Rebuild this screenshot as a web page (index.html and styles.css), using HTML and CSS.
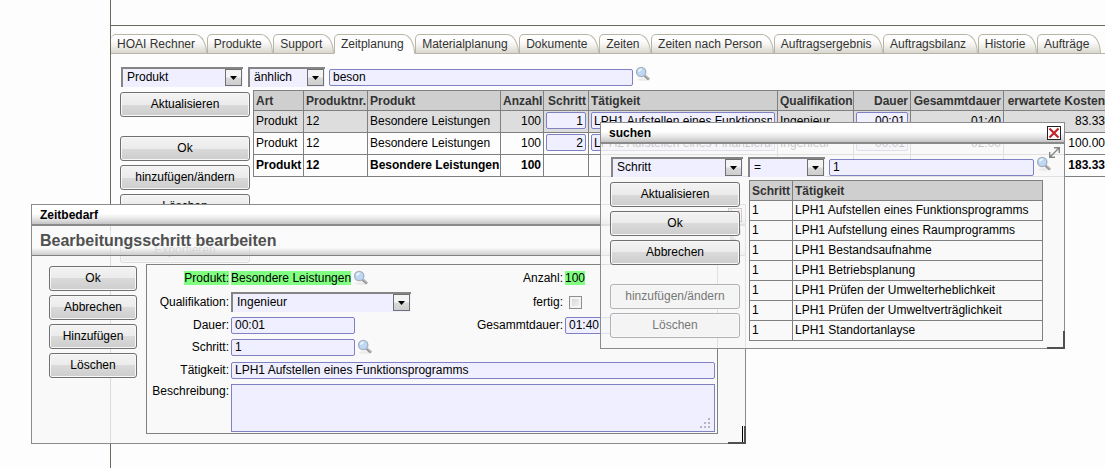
FILE: index.html
```
<!DOCTYPE html>
<html lang="de">
<head>
<meta charset="utf-8">
<title>Zeitplanung</title>
<link rel="stylesheet" href="styles.css">
</head>
<body>
<svg class="defs" aria-hidden="true">
  <symbol id="lens" viewBox="0 0 16 16">
    <ellipse cx="8" cy="13.500" rx="6" ry="1.500" fill="#ececec"/>
    <path d="M9.500 9.500l4.500 4" stroke="#949494" stroke-width="2.600"/>
    <path d="M9.800 9l4.400 3.900" stroke="#c4c4c4" stroke-width="1"/>
    <circle cx="6.200" cy="6" r="4.600" fill="#bcd8f5" stroke="#a6b2c0" stroke-width="1.400"/>
    <path d="M3.800 5.800a2.600 2.600 0 0 1 2.800-2.400" stroke="#f4faff" stroke-width="1.600" fill="none"/>
  </symbol>
  <symbol id="down" viewBox="0 0 15 15"><path d="M4 6h7L7.500 10z" fill="#000"/></symbol>
  <symbol id="cross" viewBox="0 0 12 12"><path d="M1.500 1.500l9 9M10.500 1.500l-9 9" stroke="#c4242b" stroke-width="2.200" fill="none"/></symbol>
  <symbol id="expand" viewBox="0 0 11 11"><path d="M1.500 9.500l8-8M5 .7h5.300v5.300M.7 5v5.300h5.300" stroke="#858585" stroke-width="1.400" fill="none"/></symbol>
</svg>

<main class="page">
  <div class="top"></div>
  <nav class="tabs">
    <a class="tab" href="#">HOAI Rechner</a>
    <a class="tab" href="#">Produkte</a>
    <a class="tab" href="#">Support</a>
    <a class="tab active" href="#">Zeitplanung</a>
    <a class="tab" href="#">Materialplanung</a>
    <a class="tab" href="#">Dokumente</a>
    <a class="tab" href="#">Zeiten</a>
    <a class="tab" href="#">Zeiten nach Person</a>
    <a class="tab" href="#">Auftragsergebnis</a>
    <a class="tab" href="#">Auftragsbilanz</a>
    <a class="tab" href="#">Historie</a>
    <a class="tab" href="#">Aufträge</a>
  </nav>
  <div class="filter">
    <span class="select w-field"><select aria-label="Feld"><option>Produkt</option></select><svg class="arrow"><use href="#down"/></svg></span>
    <span class="select w-op"><select aria-label="Vergleich"><option>änhlich</option></select><svg class="arrow"><use href="#down"/></svg></span>
    <input class="text w-query" aria-label="Suchbegriff" value="beson">
    <button class="lens" aria-label="Suchen"><svg><use href="#lens"/></svg></button>
  </div>
  <div class="content">
    <div class="actions">
      <button class="btn">Aktualisieren</button>
      <button class="btn apart">Ok</button>
      <button class="btn">hinzufügen/ändern</button>
      <button class="btn">Löschen</button>
      <button class="btn apart">Exportieren</button>
    </div>
    <table class="grid plan">
      <colgroup><col class="c-art"><col class="c-nr"><col class="c-prod"><col class="c-anz"><col class="c-step"><col class="c-task"><col class="c-qual"><col class="c-dur"><col class="c-sum"><col class="c-cost"></colgroup>
      <thead>
        <tr><th>Art</th><th>Produktnr.</th><th>Produkt</th><th class="num">Anzahl</th><th class="num">Schritt</th><th>Tätigkeit</th><th>Qualifikation</th><th class="num">Dauer</th><th class="num">Gesammtdauer</th><th class="num">erwartete Kosten</th></tr>
      </thead>
      <tbody>
        <tr class="selected"><td>Produkt</td><td>12</td><td>Besondere Leistungen</td><td class="num">100</td><td><input class="text num" aria-label="Schritt" value="1"></td><td><input class="text" aria-label="Tätigkeit" value="LPH1 Aufstellen eines Funktionsprogramms"></td><td>Ingenieur</td><td><input class="text num" aria-label="Dauer" value="00:01"></td><td class="num">01:40</td><td class="num">83.33</td></tr>
        <tr><td>Produkt</td><td>12</td><td>Besondere Leistungen</td><td class="num">100</td><td><input class="text num" aria-label="Schritt" value="2"></td><td><input class="text" aria-label="Tätigkeit" value="LPH2 Aufstellen eines Finanzierungsplans"></td><td>Ingenieur</td><td><input class="text num" aria-label="Dauer" value="00:01"></td><td class="num">02:00</td><td class="num">100.00</td></tr>
        <tr class="total"><td>Produkt</td><td>12</td><td>Besondere Leistungen</td><td class="num">100</td><td></td><td></td><td></td><td></td><td></td><td class="num">183.33</td></tr>
      </tbody>
    </table>
  </div>
</main>

<section class="window edit">
  <header class="titlebar">Zeitbedarf<button class="close" aria-label="Schließen"><svg><use href="#cross"/></svg></button></header>
  <svg class="expand"><use href="#expand"/></svg>
  <h1 class="heading">Bearbeitungsschritt bearbeiten</h1>
  <div class="edit-body">
    <div class="actions">
      <button class="btn">Ok</button>
      <button class="btn">Abbrechen</button>
      <button class="btn">Hinzufügen</button>
      <button class="btn">Löschen</button>
    </div>
    <form class="form">
      <span class="label"><mark>Produkt:</mark></span>
      <span class="value"><mark>Besondere Leistungen</mark><button type="button" class="lens" aria-label="Produkt suchen"><svg><use href="#lens"/></svg></button></span>
      <span class="label">Anzahl:</span>
      <span class="value"><mark>100</mark></span>

      <label class="label" for="qual">Qualifikation:</label>
      <span class="value"><span class="select w-qual"><select id="qual"><option>Ingenieur</option></select><svg class="arrow"><use href="#down"/></svg></span></span>
      <label class="label" for="done">fertig:</label>
      <span class="value"><input class="check" type="checkbox" id="done"></span>

      <label class="label" for="dur">Dauer:</label>
      <span class="value"><input class="text w-short" id="dur" value="00:01"></span>
      <label class="label" for="sum">Gesammtdauer:</label>
      <span class="value"><input class="text w-short" id="sum" value="01:40"></span>

      <label class="label" for="step">Schritt:</label>
      <span class="value wide"><input class="text w-short" id="step" value="1"><button type="button" class="lens" aria-label="Schritt suchen"><svg><use href="#lens"/></svg></button></span>

      <label class="label" for="task">Tätigkeit:</label>
      <span class="value wide"><input class="text w-full" id="task" value="LPH1 Aufstellen eines Funktionsprogramms"></span>

      <label class="label top-label" for="desc">Beschreibung:</label>
      <span class="value wide"><textarea class="area" id="desc"></textarea><svg class="grip" viewBox="0 0 11 11"><path d="M8 0h2v2H8zM4 4h2v2H4zM8 4h2v2H8zM0 8h2v2H0zM4 8h2v2H4zM8 8h2v2H8z" fill="#b4b4c4"/></svg></span>
    </form>
  </div>
  <span class="corner grabbed"></span>
</section>

<section class="window search">
  <header class="titlebar">suchen<button class="close" aria-label="Schließen"><svg><use href="#cross"/></svg></button></header>
  <svg class="expand"><use href="#expand"/></svg>
  <div class="filter">
    <span class="select w-field"><select aria-label="Feld"><option>Schritt</option></select><svg class="arrow"><use href="#down"/></svg></span>
    <span class="select w-op"><select aria-label="Vergleich"><option>=</option></select><svg class="arrow"><use href="#down"/></svg></span>
    <input class="text w-query" aria-label="Suchbegriff" value="1">
    <button class="lens" aria-label="Suchen"><svg><use href="#lens"/></svg></button>
  </div>
  <div class="content">
    <div class="actions">
      <button class="btn">Aktualisieren</button>
      <button class="btn">Ok</button>
      <button class="btn">Abbrechen</button>
      <button class="btn apart" disabled>hinzufügen/ändern</button>
      <button class="btn" disabled>Löschen</button>
    </div>
    <table class="grid steps">
      <colgroup><col class="s-step"><col class="s-task"></colgroup>
      <thead><tr><th>Schritt</th><th>Tätigkeit</th></tr></thead>
      <tbody>
        <tr><td>1</td><td>LPH1 Aufstellen eines Funktionsprogramms</td></tr>
        <tr><td>1</td><td>LPH1 Aufstellung eines Raumprogramms</td></tr>
        <tr><td>1</td><td>LPH1 Bestandsaufnahme</td></tr>
        <tr><td>1</td><td>LPH1 Betriebsplanung</td></tr>
        <tr><td>1</td><td>LPH1 Prüfen der Umwelterheblichkeit</td></tr>
        <tr><td>1</td><td>LPH1 Prüfen der Umweltverträglichkeit</td></tr>
        <tr><td>1</td><td>LPH1 Standortanlayse</td></tr>
      </tbody>
    </table>
  </div>
  <span class="corner"></span>
</section>
</body>
</html>
```
FILE: styles.css
```
* { box-sizing: border-box; }
body {
  margin: 0;
  min-height: 100vh;
  display: flex;
  position: relative;
  overflow: hidden;
  background: #fdfdfd;
  color: #000;
  font: 12px/16px "Liberation Sans", Arial, sans-serif;
}
input, select, button, textarea { font: inherit; color: inherit; margin: 0; }
.defs { position: absolute; width: 0; height: 0; }

/* page frame */
.page {
  flex: 1;
  min-width: 0;
  margin-left: 110px;
  border-left: 1px solid #69695e;
  overflow: hidden;
}
.top { height: 26px; border-bottom: 1px solid #69695e; }

/* tabs */
.tabs {
  display: flex;
  margin-top: 8px;
  height: 20px;
  padding-right: 4px;
  border-bottom: 1px solid #b9b5a6;
}
.tab {
  flex: 1 0 auto;
  height: 20px;
  padding: 1px 10px 0 6px;
  border: 1px solid #b9b5a6;
  border-left-width: 0;
  border-radius: 5px 12px 0 0 / 5px 20px 0 0;
  background: linear-gradient(#fefefe 30%, #f1f0ec 60%, #d9d6cd);
  color: #333;
  text-decoration: none;
  white-space: nowrap;
}
.tab + .tab { border-left-width: 1px; }
.tab.active { background: #fdfdfd; border-bottom-color: #fdfdfd; }

/* controls */
.text {
  height: 17px;
  padding: 0 3px;
  border: 1px solid #8080c4;
  border-radius: 2px;
  background: #efefff;
}
.num { text-align: right; }
.select { position: relative; display: flex; height: 20px; }
.select select {
  appearance: none;
  width: 100%;
  height: 20px;
  padding: 0 20px 2px 4px;
  border: 0 solid #858585;
  border-width: 2px 0 0 2px;
  border-radius: 0;
  background: #efefff;
}
.arrow {
  position: absolute;
  right: 1px;
  top: 2px;
  width: 17px;
  height: 17px;
  border: 1px solid #707070;
  background: linear-gradient(#f4f4f4 45%, #d8d8d8 55%, #cecece);
  pointer-events: none;
}
.lens { display: flex; padding: 0; border: 0; background: none; }
.lens svg { width: 16px; height: 16px; }
.btn {
  height: 25px;
  padding: 0 4px 1px;
  border: 1px solid #707070;
  border-radius: 3px;
  background: linear-gradient(#f3f3f3, #ebebeb 50%, #dadada 50%, #cdcdcd);
  box-shadow: inset 0 0 0 1px #f8f8f8;
  white-space: nowrap;
}
.btn:disabled { background: #f4f4f4; border-color: #adb2b5; color: #777; }
.actions { display: flex; flex-direction: column; gap: 4px; width: 130px; flex: none; }
.apart { margin-top: 15px; }

.filter { display: flex; align-items: center; padding: 0 10px; }
.page .filter { margin-top: 13px; }
.filter .w-op { margin: 0 4px 0 5px; }
.filter .lens { margin: -6px 0 0 2px; }
.w-field { width: 122px; }
.w-op { width: 77px; }
.w-query { width: 304px; }
.content { display: flex; align-items: flex-start; padding-left: 9px; }
.page .content { margin-top: 3px; gap: 3px; }
.page .actions { margin-top: 2px; }

/* tables */
.grid { border-collapse: collapse; table-layout: fixed; flex: none; white-space: nowrap; }
.grid th, .grid td { height: 20px; padding: 0 2px; border: 1px solid #808080; text-align: left; overflow: hidden; }
.grid td { padding-bottom: 2px; }
.grid th { background: #cfcfcf; color: #333; }
.grid .num { text-align: right; }
.grid .text { display: block; width: 100%; padding: 0 2px; }
.plan { width: 854px; }
.plan td { height: 22px; }
.selected { background: #ddd; }
.total { font-weight: bold; }
.c-art { width: 50px; }
.c-nr { width: 64px; }
.c-prod { width: 133px; }
.c-anz { width: 43px; }
.c-step { width: 45px; }
.c-task { width: 189px; }
.c-qual { width: 76px; }
.c-dur { width: 57px; }
.c-sum { width: 93px; }
.c-cost { width: 104px; }

/* floating windows */
.window {
  position: absolute;
  border: 1px solid #8c8c8c;
  background: rgba(247, 247, 247, 0.8);
}
.titlebar {
  display: flex;
  align-items: center;
  justify-content: space-between;
  height: 21px;
  padding: 0 3px 0 8px;
  border-bottom: 2px solid #8a8a8a;
  background: linear-gradient(#fff 45%, #e4e4e4 75%, #c4c4c4);
  font-weight: bold;
}
.close { display: flex; width: 14px; height: 14px; padding: 0; border: 1px solid #222; background: #fff; }
.close svg { width: 12px; height: 12px; }
.expand { position: absolute; right: 4px; top: 24px; width: 11px; height: 11px; }
.corner {
  position: absolute;
  right: -1px;
  bottom: -1px;
  width: 18px;
  height: 18px;
  border: solid #505050;
  border-width: 0 2px 2px 0;
  clip-path: polygon(100% 0, 100% 100%, 0 100%, 0 16px, 12px 16px, 12px 0);
}
.grabbed { box-shadow: inset -1px 0 0 #f8f8f8, inset -2px 0 0 #000; }

.edit { left: 31px; top: 204px; width: 715px; }
.heading {
  height: 30px;
  margin: 0;
  padding: 0 8px;
  border-bottom: 1px solid #808080;
  background: linear-gradient(transparent 10%, rgba(255, 255, 255, 0.3) 20%, rgba(252, 252, 252, 0.3) 75%, #cdcdcd);
  color: #505050;
  font-size: 16px;
  line-height: 30px;
}
.edit-body { display: flex; align-items: flex-start; gap: 9px; padding: 8px 27px 9px 17px; }
.edit .actions { width: 88px; margin-top: 2px; }
.form {
  flex: 1;
  display: grid;
  grid-template-columns: 82px 1fr auto 150px;
  grid-template-rows: 26px 22px 24px 20px 26px 50px;
  column-gap: 2px;
  align-items: center;
  padding: 0 2px 0 0;
  border: 1px solid #808080;
}
.label { text-align: right; white-space: nowrap; }
.top-label { align-self: start; }
.value { position: relative; display: flex; align-items: center; }
.value.wide { grid-column: 2 / -1; }
.value .lens { margin-left: 2px; }
.form mark { background: #80ff80; color: #000; line-height: 14px; }
.form .label mark { display: inline-block; }
.w-qual { width: 180px; }
.w-short { width: 124px; }
.w-full { width: 100%; }
.check {
  appearance: none;
  width: 13px;
  height: 13px;
  margin-left: 4px;
  border: 1px solid #8e8f8f;
  background: linear-gradient(135deg, #cfd2d6, #f6f6f6);
  box-shadow: inset 0 0 0 2px #f4f4f4;
}
.area { width: 100%; height: 48px; padding: 1px 3px; border: 1px solid #8080c4; background: #efefff; resize: none; }
.grip { position: absolute; right: 4px; bottom: 3px; width: 11px; height: 11px; }

.search { left: 600px; top: 122px; width: 465px; }
.search .filter { margin-top: 13px; }
.search .w-field { width: 132px; }
.search .w-query { flex: 1; min-width: 0; }
.search .filter { padding-right: 12px; }
.search .content { gap: 9px; margin-top: 3px; padding-bottom: 7px; }
.search .actions { margin-top: 2px; }
.steps { width: 293px; }
.s-step { width: 43px; }
.s-task { width: 250px; }
```
